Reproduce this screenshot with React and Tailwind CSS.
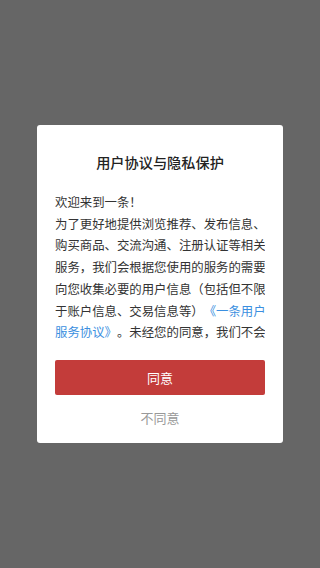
const lines = [
  ['欢迎来到一条！'],
  ['为了更好地提供浏览推荐、发布信息、'],
  ['购买商品、交流沟通、注册认证等相关'],
  ['服务，我们会根据您使用的服务的需要'],
  ['向您收集必要的用户信息（包括但不限'],
  ['于账户信息、交易信息等）', '《一条用户'],
  ['服务协议》', '。未经您的同意，我们不会', true],
]

export default function App() {
  return (
    <div
      className="flex h-screen w-full items-center justify-center bg-[#666666] [text-spacing-trim:space-all]"
      style={{ fontFamily: '"Noto Sans CJK SC", "Noto Sans", sans-serif' }}
    >
      <div className="flex w-[246px] flex-col rounded-[3px] bg-white px-[18px] pb-[15px] pt-[27px]">
        <h2 className="text-center text-[14.2px] font-medium leading-[20px] text-[#222]">用户协议与隐私保护</h2>
        <div className="mt-[20px] h-[152px] overflow-hidden text-[12.4px] leading-[21.7px] text-[#333]">
          {lines.map(([a, b, linkFirst], i) => (
            <div key={i} className="whitespace-nowrap">
              {linkFirst ? (
                <>
                  <span className="text-[#3b8fe0]">{a}</span>
                  {b}
                </>
              ) : (
                <>
                  {a}
                  {b && <span className="text-[#3b8fe0]">{b}</span>}
                </>
              )}
            </div>
          ))}
        </div>
        <button className="mt-[16px] flex h-[35px] items-center justify-center rounded-[2px] bg-[#c33c3a] text-[13px] text-white">
          同意
        </button>
        <button className="mt-[13px] h-[20px] text-[13px] leading-[20px] text-[#999]">不同意</button>
      </div>
    </div>
  )
}
